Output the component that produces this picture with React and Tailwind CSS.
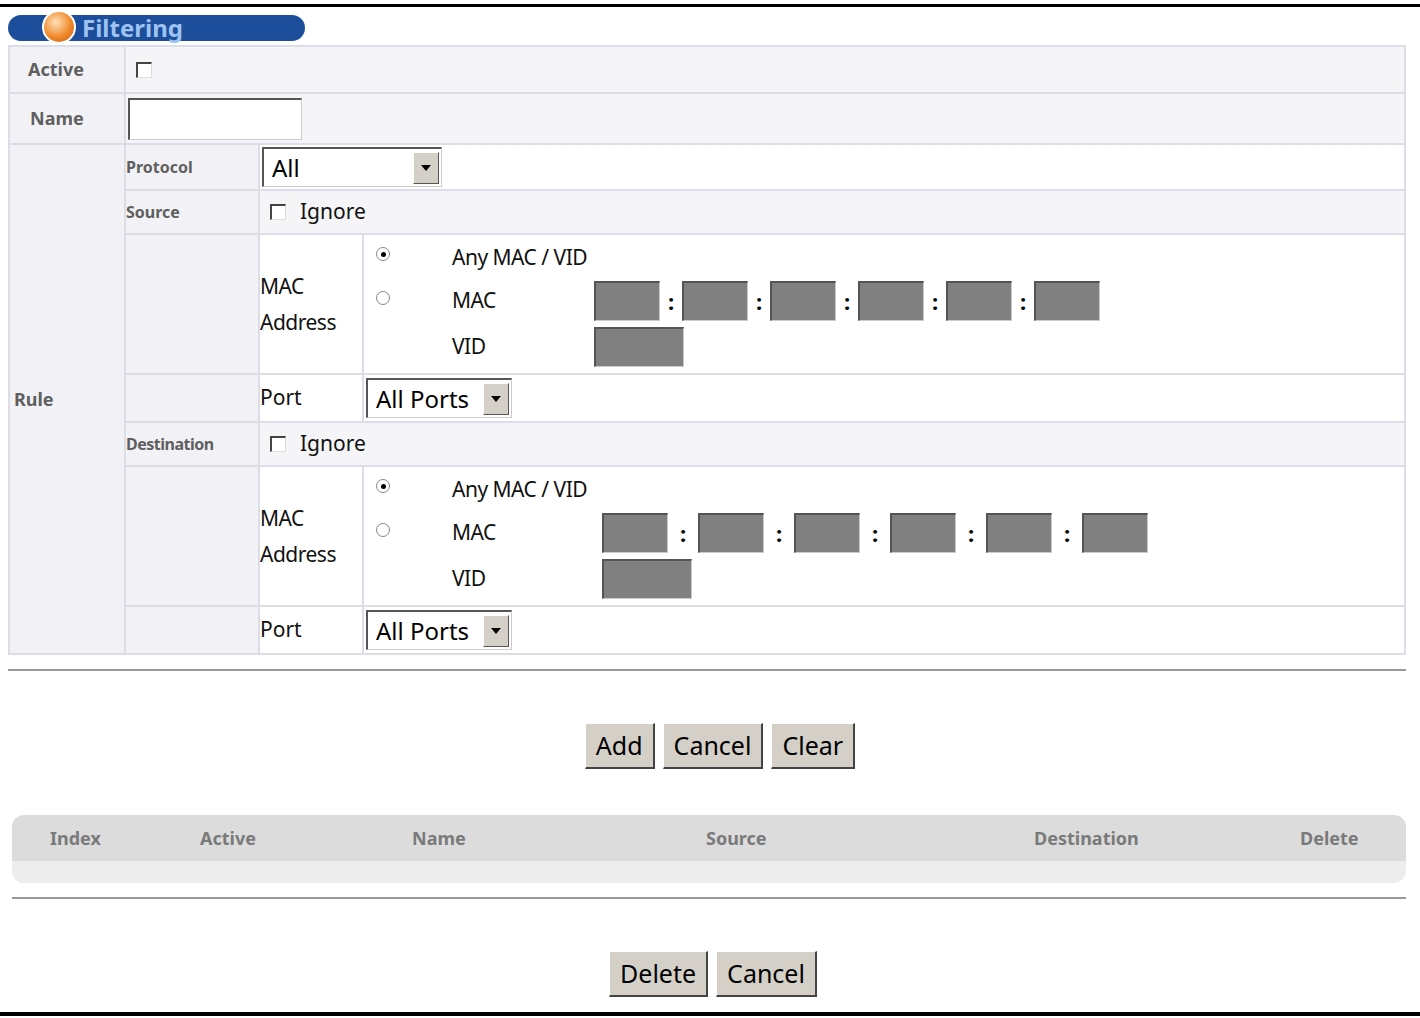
import React from "react";

const lbl = "text-[#5f5f5f] font-bold text-[16px] font-['DejaVu_Sans',sans-serif]";
const txt = "text-[#111] text-[17px] font-['Liberation_Sans',Arial,sans-serif]";

function Check() {
  return <span className="inline-block w-[16px] h-[16px] bg-white border-t-2 border-l-2 border-[#444] border-r border-b border-r-[#ddd] border-b-[#ddd]" />;
}

function Radio({ on }) {
  return (
    <span className="inline-flex w-[14px] h-[14px] rounded-full bg-white border border-[#888] items-center justify-center">
      {on && <span className="w-[5px] h-[5px] rounded-full bg-black" />}
    </span>
  );
}

function Select({ value, w }) {
  return (
    <div className={`flex items-center h-[40px] bg-white border-t-2 border-l-2 border-[#555] border-r border-b border-r-[#ccc] border-b-[#ccc] ${w}`}>
      <span className="flex-1 pl-[8px] text-[#000] text-[24px] font-['Liberation_Sans',Arial,sans-serif] leading-none">{value}</span>
      <span className="w-[26px] h-[32px] mr-[2px] bg-[#d4d0c8] border border-white border-r-[#555] border-b-[#555] flex items-center justify-center">
        <svg width="10" height="6" viewBox="0 0 10 6"><path d="M0 0h10L5 6z" fill="#000" /></svg>
      </span>
    </div>
  );
}

function Box({ w = "w-[66px]" }) {
  return <span className={`inline-block ${w} h-[40px] bg-[#808080] border-t-2 border-l-2 border-[#555] border-r border-b border-r-[#ccc] border-b-[#ccc]`} />;
}

function MacBlock({ gap, start }) {
  return (
    <div className="flex gap-[2px]">
      <div className="w-[132px] bg-[#f2f2f6]" />
      <div className="w-[102px] bg-white flex items-center">
        <div className={`${txt} leading-[36px] text-[21px] tracking-[-0.5px]`}>MAC<br />Address</div>
      </div>
      <div className="flex-1 bg-white h-[138px]">
        <div className="flex">
          <div className="w-[88px] pl-[12px] flex flex-col pt-[12px] gap-[30px]">
            <Radio on />
            <Radio />
          </div>
          <div className="flex flex-col">
            <div className={`${txt} text-[21px] tracking-[-0.5px] h-[44px] flex items-center pt-[2px]`}>Any MAC / VID</div>
            <div className="flex items-center h-[44px]">
              <span className={`${txt} text-[21px] tracking-[-0.5px] ${start}`}>MAC</span>
              {[0, 1, 2, 3, 4, 5].map((i) => (
                <React.Fragment key={i}>
                  {i > 0 && <span className={`${gap} text-center text-[22px] font-bold`}>:</span>}
                  <Box />
                </React.Fragment>
              ))}
            </div>
            <div className="flex items-center h-[48px]">
              <span className={`${txt} text-[21px] tracking-[-0.5px] ${start}`}>VID</span>
              <Box w="w-[90px]" />
            </div>
          </div>
        </div>
      </div>
    </div>
  );
}

function Btn({ children }) {
  return (
    <button className="h-[46px] px-[10px] bg-[#d4d0c8] border border-white border-r-2 border-b-2 border-r-[#444] border-b-[#444] text-[25px] text-[#000] font-['Liberation_Sans',Arial,sans-serif]">
      {children}
    </button>
  );
}

export default function App() {
  return (
    <div className="w-[1420px] h-[1018px] bg-white relative overflow-hidden">
      <div className="border-t-[3px] border-black mt-[4px]" />
      <div className="pl-[8px] pr-[14px]">
        <div className="mt-[8px] w-[297px] h-[26px] rounded-full bg-[#1d4e9c] flex items-center pl-[34px]">
          <span className="w-[34px] h-[34px] rounded-full bg-[radial-gradient(circle_at_40%_35%,#ffe2b8,#f08a2c_55%,#c75a10)] border-2 border-white -mt-[2px]" />
          <span className="ml-[6px] text-[#9ec3f0] font-bold text-[24px] font-['DejaVu_Sans',sans-serif] leading-none">Filtering</span>
        </div>
        <div className="mt-[4px] bg-[#dcdde6] p-[2px] flex flex-col gap-[2px]">
          <div className="flex gap-[2px] h-[45px]">
            <div className={`w-[114px] bg-[#f2f2f6] flex items-center pl-[18px] ${lbl} text-[18px]`}>Active</div>
            <div className="flex-1 bg-[#f5f5f8] flex items-center pl-[10px]"><Check /></div>
          </div>
          <div className="flex gap-[2px] h-[49px]">
            <div className={`w-[114px] bg-[#f2f2f6] flex items-center pl-[20px] ${lbl} text-[18px]`}>Name</div>
            <div className="flex-1 bg-[#f5f5f8] flex items-center pl-[2px]">
              <span className="w-[174px] h-[42px] bg-white border-t-2 border-l-2 border-[#555] border-r border-b border-r-[#ccc] border-b-[#ccc]" />
            </div>
          </div>
          <div className="flex gap-[2px]">
            <div className={`w-[114px] bg-[#f2f2f6] flex items-center pl-[4px] ${lbl} text-[18px]`}>Rule</div>
            <div className="flex-1 flex flex-col gap-[2px]">
              <div className="flex gap-[2px] h-[44px]">
                <div className={`w-[132px] bg-[#f2f2f6] flex items-center ${lbl}`}>Protocol</div>
                <div className="flex-1 bg-white flex items-center pl-[2px]"><Select value="All" w="w-[180px]" /></div>
              </div>
              <div className="flex gap-[2px] h-[42px]">
                <div className={`w-[132px] bg-[#f2f2f6] flex items-center ${lbl}`}>Source</div>
                <div className="flex-1 bg-[#f5f5f8] flex items-center pl-[10px] gap-[14px]"><Check /><span className={`${txt} text-[21px]`}>Ignore</span></div>
              </div>
              <MacBlock gap="w-[22px]" start="w-[142px]" />
              <div className="flex gap-[2px] h-[46px]">
                <div className="w-[132px] bg-[#f2f2f6]" />
                <div className={`w-[102px] bg-white flex items-center ${txt} text-[21px]`}>Port</div>
                <div className="flex-1 bg-white flex items-center pl-[2px]"><Select value="All Ports" w="w-[146px]" /></div>
              </div>
              <div className="flex gap-[2px] h-[42px]">
                <div className={`w-[132px] bg-[#f2f2f6] flex items-center ${lbl} tracking-[-0.5px]`}>Destination</div>
                <div className="flex-1 bg-[#f5f5f8] flex items-center pl-[10px] gap-[14px]"><Check /><span className={`${txt} text-[21px]`}>Ignore</span></div>
              </div>
              <MacBlock gap="w-[30px]" start="w-[150px]" />
              <div className="flex gap-[2px] h-[46px]">
                <div className="w-[132px] bg-[#f2f2f6]" />
                <div className={`w-[102px] bg-white flex items-center ${txt} text-[21px]`}>Port</div>
                <div className="flex-1 bg-white flex items-center pl-[2px]"><Select value="All Ports" w="w-[146px]" /></div>
              </div>
            </div>
          </div>
        </div>
        <div className="mt-[14px] border-t-2 border-[#999]" />
        <div className="mt-[52px] flex justify-center gap-[8px] pl-[26px]">
          <Btn>Add</Btn>
          <Btn>Cancel</Btn>
          <Btn>Clear</Btn>
        </div>
        <div className="mt-[46px] ml-[4px] rounded-[12px] overflow-hidden">
          <div className={`h-[46px] bg-[#dcdcdc] flex items-center ${lbl} text-[#7a7a7a] text-[18px]`}>
            <span className="w-[188px] pl-[38px]">Index</span>
            <span className="w-[212px]">Active</span>
            <span className="w-[294px]">Name</span>
            <span className="w-[328px]">Source</span>
            <span className="w-[266px]">Destination</span>
            <span>Delete</span>
          </div>
          <div className="h-[22px] bg-[#ededed]" />
        </div>
        <div className="mt-[14px] ml-[4px] border-t-2 border-[#999]" />
        <div className="mt-[52px] flex justify-center gap-[8px] pl-[12px]">
          <Btn>Delete</Btn>
          <Btn>Cancel</Btn>
        </div>
      </div>
      <div className="absolute left-0 right-0 top-[1012px] border-t-[4px] border-black" />
    </div>
  );
}
